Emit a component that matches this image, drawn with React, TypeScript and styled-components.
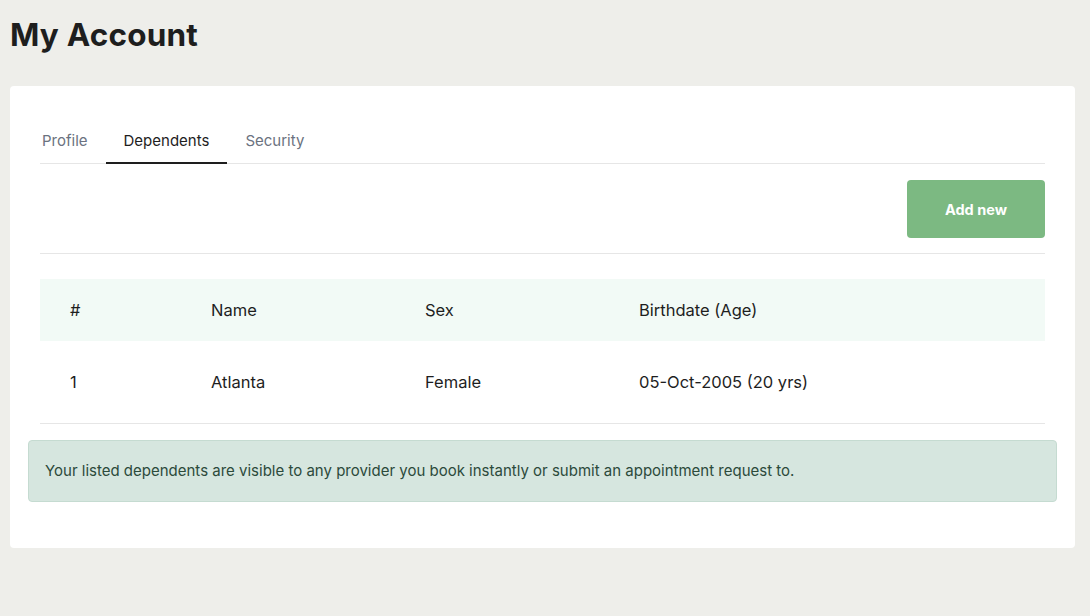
import styled, { createGlobalStyle } from "styled-components";

const GlobalStyle = createGlobalStyle`
  html, body {
    margin: 0;
    padding: 0;
    background: #eeeeea;
  }
  body {
    font-family: Inter, "Noto Sans", "Liberation Sans", sans-serif;
    color: #1f1f1f;
  }
`;

const Page = styled.main`
  padding: 14px 15px 68px 10px;
`;

const Title = styled.h1`
  margin: 0 0 30px;
  font-size: 31.5px;
  font-weight: 700;
  line-height: 42px;
  letter-spacing: 0.2px;
  color: #1e1e1e;
`;

const Card = styled.section`
  background: #ffffff;
  border-radius: 4px;
  padding: 24px 18px 46px;
`;

const Inner = styled.div`
  padding: 0 12px;
`;

const Tabs = styled.nav`
  display: flex;
  border-bottom: 1px solid #e6e6e6;
`;

const Tab = styled.button<{ $active?: boolean }>`
  font-family: inherit;
  font-size: 15px;
  background: none;
  border: none;
  padding: 21px ${(p) => (p.$active ? "18px" : "2px")} 12px;
  margin-right: 16px;
  color: ${(p) => (p.$active ? "#1e1e1e" : "#6b7280")};
  border-bottom: 2px solid ${(p) => (p.$active ? "#1e1e1e" : "transparent")};
  margin-bottom: -1px;
  cursor: pointer;
`;

const Toolbar = styled.div`
  display: flex;
  justify-content: flex-end;
  padding: 16px 0 15px;
  border-bottom: 1px solid #e6e6e6;
`;

const AddButton = styled.button`
  width: 138px;
  height: 58px;
  border: none;
  border-radius: 4px;
  background: #7cb982;
  color: #ffffff;
  font-family: inherit;
  font-size: 14.5px;
  font-weight: 700;
  cursor: pointer;
`;

const Table = styled.table`
  width: 100%;
  margin-top: 25px;
  border-collapse: collapse;
  table-layout: fixed;
  font-size: 16.5px;
`;

const HeadCell = styled.th<{ $w: number }>`
  box-sizing: border-box;
  width: ${(p) => p.$w}px;
  height: 62px;
  padding: 0 0 0 30px;
  text-align: left;
  font-weight: 400;
  background: #f2faf6;
  color: #1e1e1e;
`;

const Cell = styled.td`
  box-sizing: border-box;
  height: 82px;
  padding: 0 0 0 30px;
  border-bottom: 1px solid #e6e6e6;
  color: #1e1e1e;
`;

const Notice = styled.div`
  margin: 16px 0 0;
  padding: 21px 16px 21px;
  background: #d6e6df;
  border: 1px solid #c5dbd1;
  border-radius: 4px;
  color: #2c4a3b;
  font-size: 15px;
  line-height: 18px;
`;

const dependents = [
  { id: 1, name: "Atlanta", sex: "Female", birth: "05-Oct-2005 (20 yrs)" },
];

export default function App() {
  return (
    <>
      <GlobalStyle />
      <Page>
        <Title>My Account</Title>
        <Card>
          <Inner>
            <Tabs>
              <Tab>Profile</Tab>
              <Tab $active>Dependents</Tab>
              <Tab>Security</Tab>
            </Tabs>
            <Toolbar>
              <AddButton>Add new</AddButton>
            </Toolbar>
            <Table>
              <thead>
                <tr>
                  <HeadCell $w={141}>#</HeadCell>
                  <HeadCell $w={214}>Name</HeadCell>
                  <HeadCell $w={214}>Sex</HeadCell>
                  <HeadCell $w={436}>Birthdate (Age)</HeadCell>
                </tr>
              </thead>
              <tbody>
                {dependents.map((d) => (
                  <tr key={d.id}>
                    <Cell>{d.id}</Cell>
                    <Cell>{d.name}</Cell>
                    <Cell>{d.sex}</Cell>
                    <Cell>{d.birth}</Cell>
                  </tr>
                ))}
              </tbody>
            </Table>
          </Inner>
          <Notice>
            Your listed dependents are visible to any provider you book instantly or submit an
            appointment request to.
          </Notice>
        </Card>
      </Page>
    </>
  );
}
